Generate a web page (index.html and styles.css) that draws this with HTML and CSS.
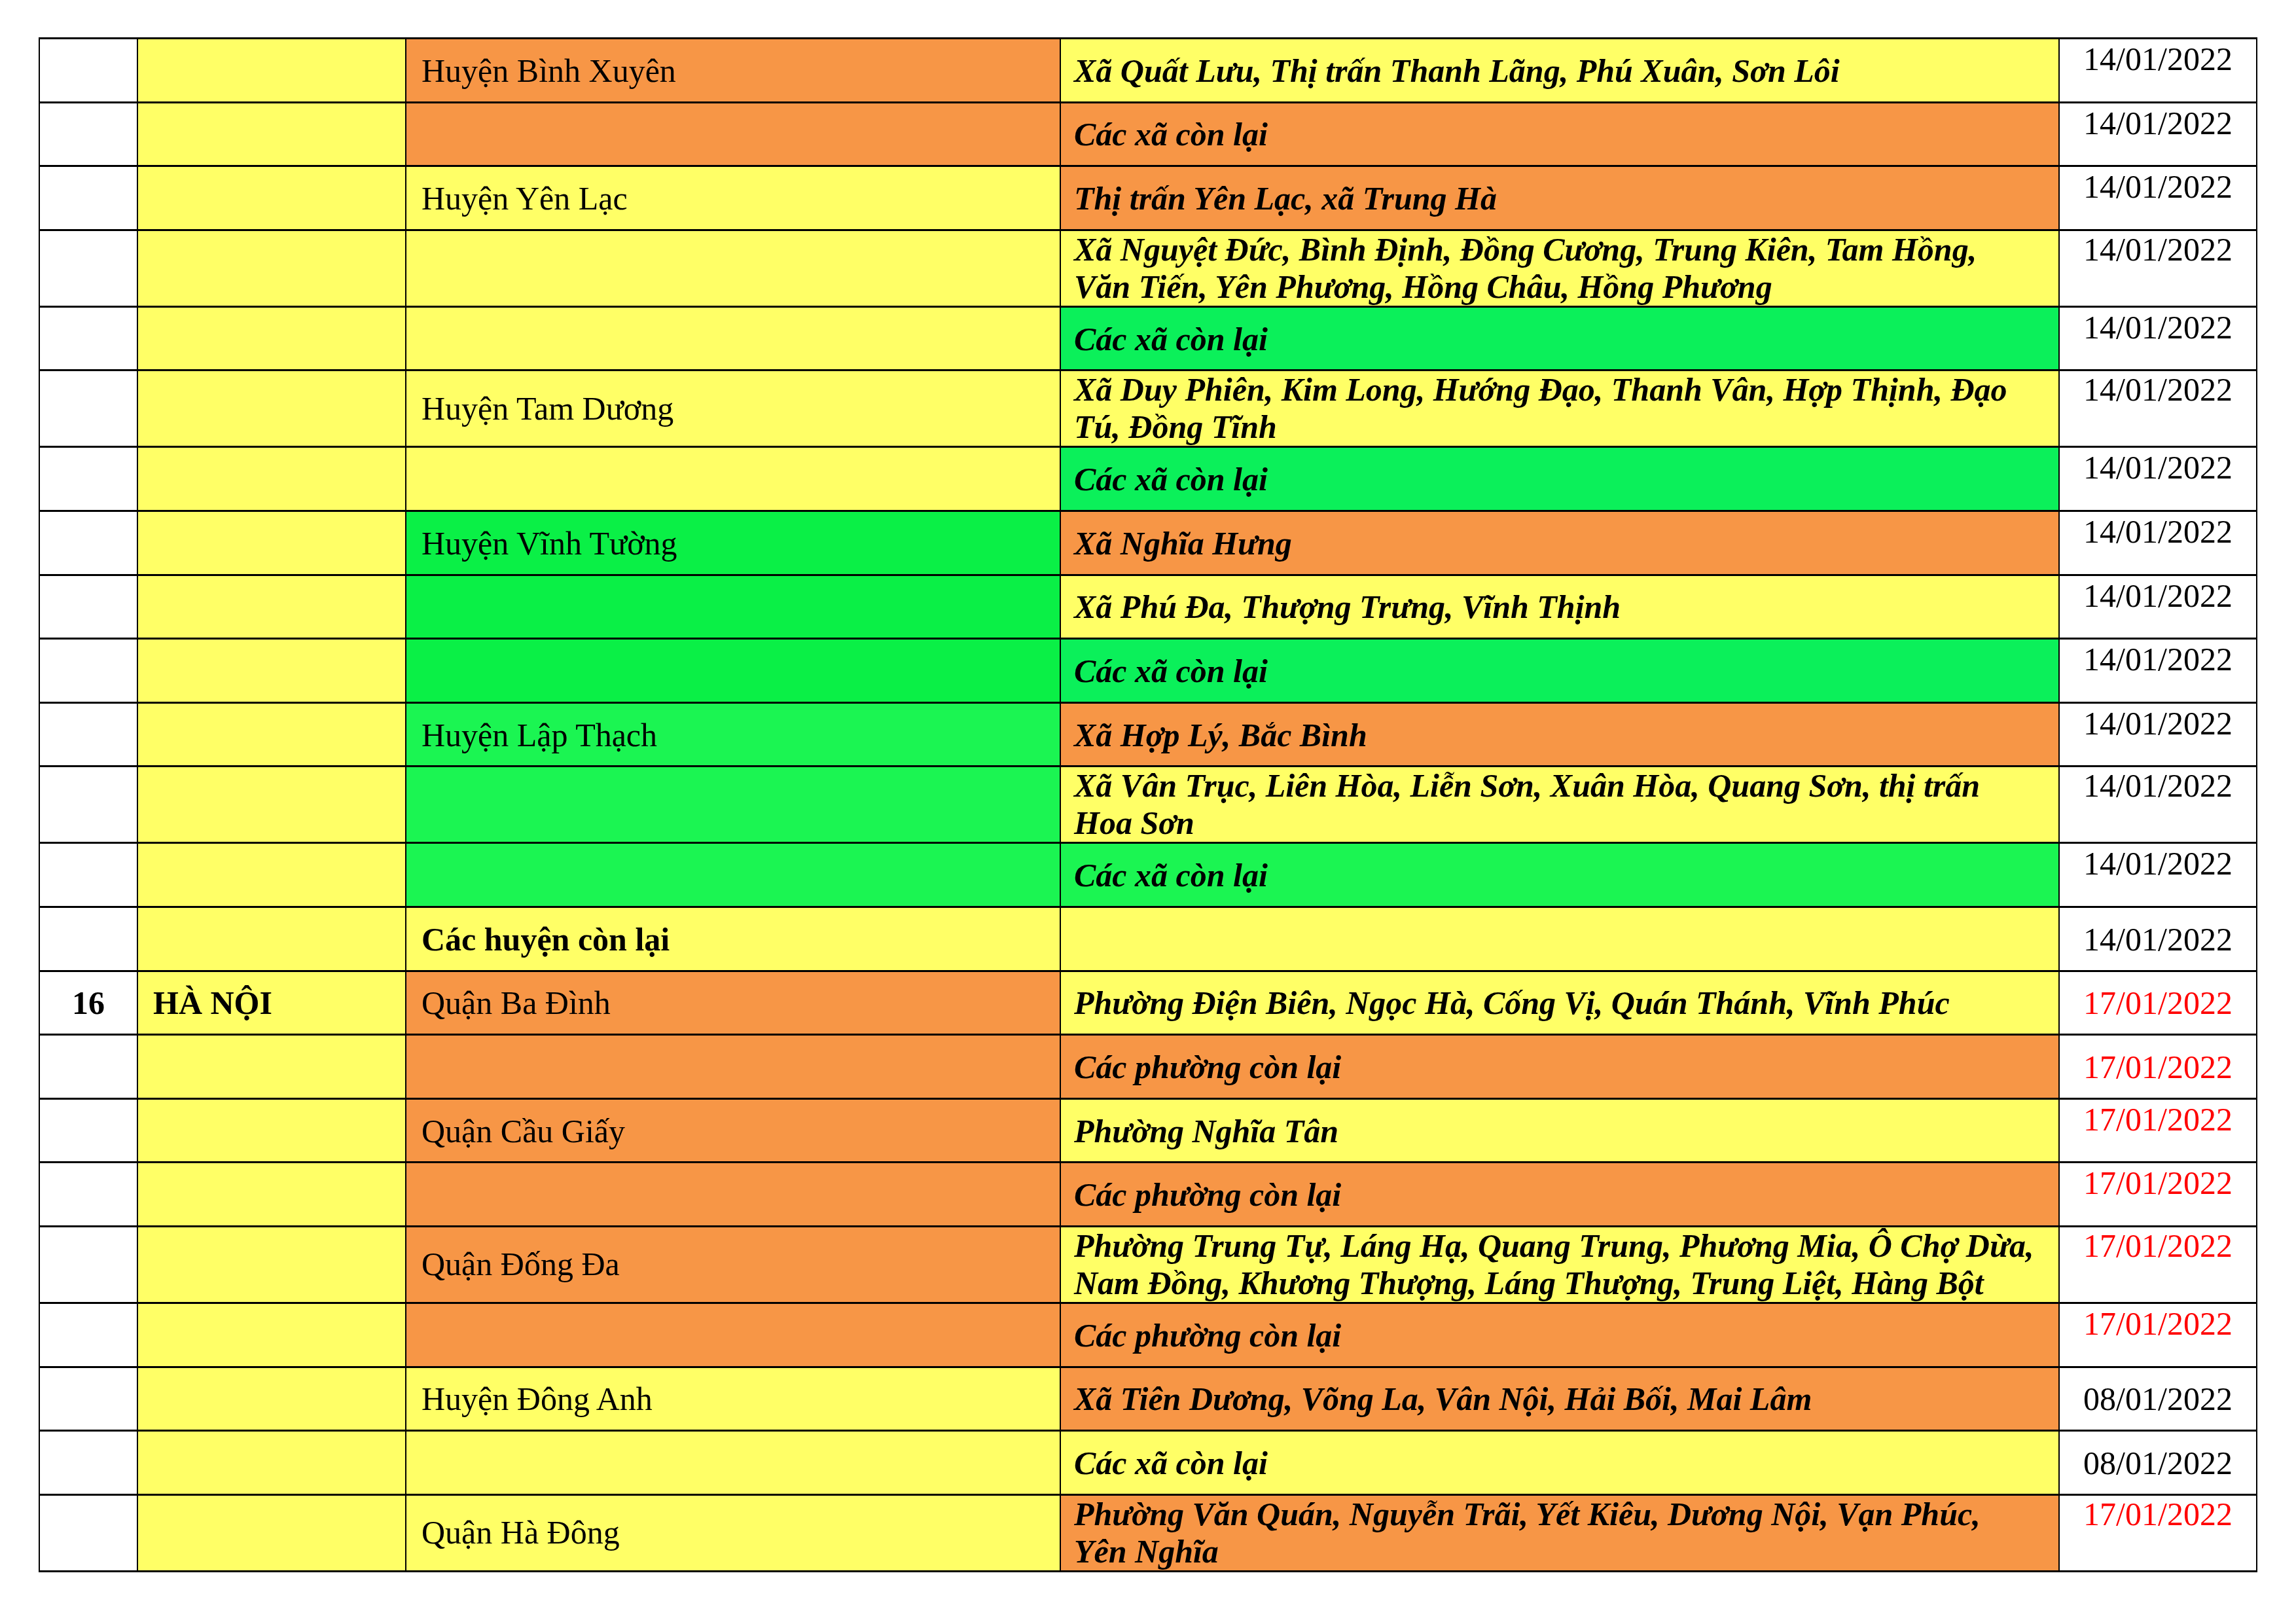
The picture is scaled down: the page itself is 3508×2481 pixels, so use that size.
FILE: index.html
```html
<!DOCTYPE html>
<html lang="vi">
<head>
<meta charset="utf-8">
<title>Bảng</title>
<link rel="stylesheet" href="styles.css">
</head>
<body>
<div class="sheet">
  <div class="row">
    <div class="c c1"></div><div class="c c2"></div>
    <div class="c c3 or">Huyện Bình Xuyên</div>
    <div class="c c4 ye">Xã Quất Lưu, Thị trấn Thanh Lãng, Phú Xuân, Sơn Lôi</div>
    <div class="c c5 top">14/01/2022</div>
  </div>
  <div class="row">
    <div class="c c1"></div><div class="c c2"></div>
    <div class="c c3 or"></div>
    <div class="c c4 or">Các xã còn lại</div>
    <div class="c c5 top">14/01/2022</div>
  </div>
  <div class="row">
    <div class="c c1"></div><div class="c c2"></div>
    <div class="c c3 ye">Huyện Yên Lạc</div>
    <div class="c c4 or">Thị trấn Yên Lạc, xã Trung Hà</div>
    <div class="c c5 top">14/01/2022</div>
  </div>
  <div class="row dbl">
    <div class="c c1"></div><div class="c c2"></div>
    <div class="c c3 ye"></div>
    <div class="c c4 ye">Xã Nguyệt Đức, Bình Định, Đồng Cương, Trung Kiên, Tam Hồng,<br>Văn Tiến, Yên Phương, Hồng Châu, Hồng Phương</div>
    <div class="c c5 top">14/01/2022</div>
  </div>
  <div class="row">
    <div class="c c1"></div><div class="c c2"></div>
    <div class="c c3 ye"></div>
    <div class="c c4 gra">Các xã còn lại</div>
    <div class="c c5 top">14/01/2022</div>
  </div>
  <div class="row dbl">
    <div class="c c1"></div><div class="c c2"></div>
    <div class="c c3 ye">Huyện Tam Dương</div>
    <div class="c c4 ye">Xã Duy Phiên, Kim Long, Hướng Đạo, Thanh Vân, Hợp Thịnh, Đạo<br>Tú, Đồng Tĩnh</div>
    <div class="c c5 top">14/01/2022</div>
  </div>
  <div class="row">
    <div class="c c1"></div><div class="c c2"></div>
    <div class="c c3 ye"></div>
    <div class="c c4 gra">Các xã còn lại</div>
    <div class="c c5 top">14/01/2022</div>
  </div>
  <div class="row">
    <div class="c c1"></div><div class="c c2"></div>
    <div class="c c3 grb">Huyện Vĩnh Tường</div>
    <div class="c c4 or">Xã Nghĩa Hưng</div>
    <div class="c c5 top">14/01/2022</div>
  </div>
  <div class="row">
    <div class="c c1"></div><div class="c c2"></div>
    <div class="c c3 grb"></div>
    <div class="c c4 ye">Xã Phú Đa, Thượng Trưng, Vĩnh Thịnh</div>
    <div class="c c5 top">14/01/2022</div>
  </div>
  <div class="row">
    <div class="c c1"></div><div class="c c2"></div>
    <div class="c c3 grb"></div>
    <div class="c c4 gra">Các xã còn lại</div>
    <div class="c c5 top">14/01/2022</div>
  </div>
  <div class="row">
    <div class="c c1"></div><div class="c c2"></div>
    <div class="c c3 grc">Huyện Lập Thạch</div>
    <div class="c c4 or">Xã Hợp Lý, Bắc Bình</div>
    <div class="c c5 top">14/01/2022</div>
  </div>
  <div class="row dbl">
    <div class="c c1"></div><div class="c c2"></div>
    <div class="c c3 grc"></div>
    <div class="c c4 ye">Xã Vân Trục, Liên Hòa, Liễn Sơn, Xuân Hòa, Quang Sơn, thị trấn<br>Hoa Sơn</div>
    <div class="c c5 top">14/01/2022</div>
  </div>
  <div class="row">
    <div class="c c1"></div><div class="c c2"></div>
    <div class="c c3 grc"></div>
    <div class="c c4 grc">Các xã còn lại</div>
    <div class="c c5 top">14/01/2022</div>
  </div>
  <div class="row">
    <div class="c c1"></div><div class="c c2"></div>
    <div class="c c3 ye b">Các huyện còn lại</div>
    <div class="c c4 ye"></div>
    <div class="c c5">14/01/2022</div>
  </div>
  <div class="row">
    <div class="c c1 b">16</div><div class="c c2 b">HÀ NỘI</div>
    <div class="c c3 or">Quận Ba Đình</div>
    <div class="c c4 ye">Phường Điện Biên, Ngọc Hà, Cống Vị, Quán Thánh, Vĩnh Phúc</div>
    <div class="c c5 red">17/01/2022</div>
  </div>
  <div class="row">
    <div class="c c1"></div><div class="c c2"></div>
    <div class="c c3 or"></div>
    <div class="c c4 or">Các phường còn lại</div>
    <div class="c c5 red">17/01/2022</div>
  </div>
  <div class="row">
    <div class="c c1"></div><div class="c c2"></div>
    <div class="c c3 or">Quận Cầu Giấy</div>
    <div class="c c4 ye">Phường Nghĩa Tân</div>
    <div class="c c5 top red">17/01/2022</div>
  </div>
  <div class="row">
    <div class="c c1"></div><div class="c c2"></div>
    <div class="c c3 or"></div>
    <div class="c c4 or">Các phường còn lại</div>
    <div class="c c5 top red">17/01/2022</div>
  </div>
  <div class="row dbl">
    <div class="c c1"></div><div class="c c2"></div>
    <div class="c c3 or">Quận Đống Đa</div>
    <div class="c c4 ye">Phường Trung Tự, Láng Hạ, Quang Trung, Phương Mia, Ô Chợ Dừa,<br>Nam Đồng, Khương Thượng, Láng Thượng, Trung Liệt, Hàng Bột</div>
    <div class="c c5 top red">17/01/2022</div>
  </div>
  <div class="row">
    <div class="c c1"></div><div class="c c2"></div>
    <div class="c c3 or"></div>
    <div class="c c4 or">Các phường còn lại</div>
    <div class="c c5 top red">17/01/2022</div>
  </div>
  <div class="row">
    <div class="c c1"></div><div class="c c2"></div>
    <div class="c c3 ye">Huyện Đông Anh</div>
    <div class="c c4 or">Xã Tiên Dương, Võng La, Vân Nội, Hải Bối, Mai Lâm</div>
    <div class="c c5">08/01/2022</div>
  </div>
  <div class="row">
    <div class="c c1"></div><div class="c c2"></div>
    <div class="c c3 ye"></div>
    <div class="c c4 ye">Các xã còn lại</div>
    <div class="c c5">08/01/2022</div>
  </div>
  <div class="row dbl">
    <div class="c c1"></div><div class="c c2"></div>
    <div class="c c3 ye">Quận Hà Đông</div>
    <div class="c c4 or">Phường Văn Quán, Nguyễn Trãi, Yết Kiêu, Dương Nội, Vạn Phúc,<br>Yên Nghĩa</div>
    <div class="c c5 top red">17/01/2022</div>
  </div>
</div>
</body>
</html>
```
FILE: styles.css
```css
html, body {
  margin: 0;
  padding: 0;
  background: #ffffff;
}

body {
  font-family: "Liberation Serif", "Times New Roman", serif;
  font-size: 50px;
  line-height: 57px;
  color: #000000;
}

.sheet {
  margin: 57px 0 0 59px;
  width: 3390px;
  box-sizing: border-box;
  border-top: 3px solid #000;
  border-left: 2px solid #000;
  border-right: 2px solid #000;
  display: flex;
  flex-direction: column;
}

.row {
  display: grid;
  grid-template-columns: 150px 410px 1000px 1526px 300px;
  min-height: 94.6px;
  border-bottom: 3px solid #000;
}

.row.dbl {
  min-height: 114px;
}

.c {
  display: flex;
  align-items: center;
  box-sizing: border-box;
  border-right: 2px solid #000;
  white-space: nowrap;
  padding: 2px 10px 0 23px;
}

.c1 {
  background: #ffffff;
  justify-content: center;
  padding: 2px 0 0 0;
}

.c2 {
  background: #ffff66;
}

.c4 {
  font-weight: bold;
  font-style: italic;
  padding-left: 20px;
}

.c5 {
  background: #ffffff;
  border-right: none;
  justify-content: center;
  padding: 2px 0 0 0;
}

.c5.top {
  align-items: flex-start;
}

.row.dbl .c {
  padding-top: 0;
}

.b {
  font-weight: bold;
}

.red {
  color: #ff0000;
}

.ye {
  background: #ffff66;
}

.or {
  background: #f79646;
}

.gra {
  background: #0bf05a;
}

.grb {
  background: #0af046;
}

.grc {
  background: #1bf552;
}
```
